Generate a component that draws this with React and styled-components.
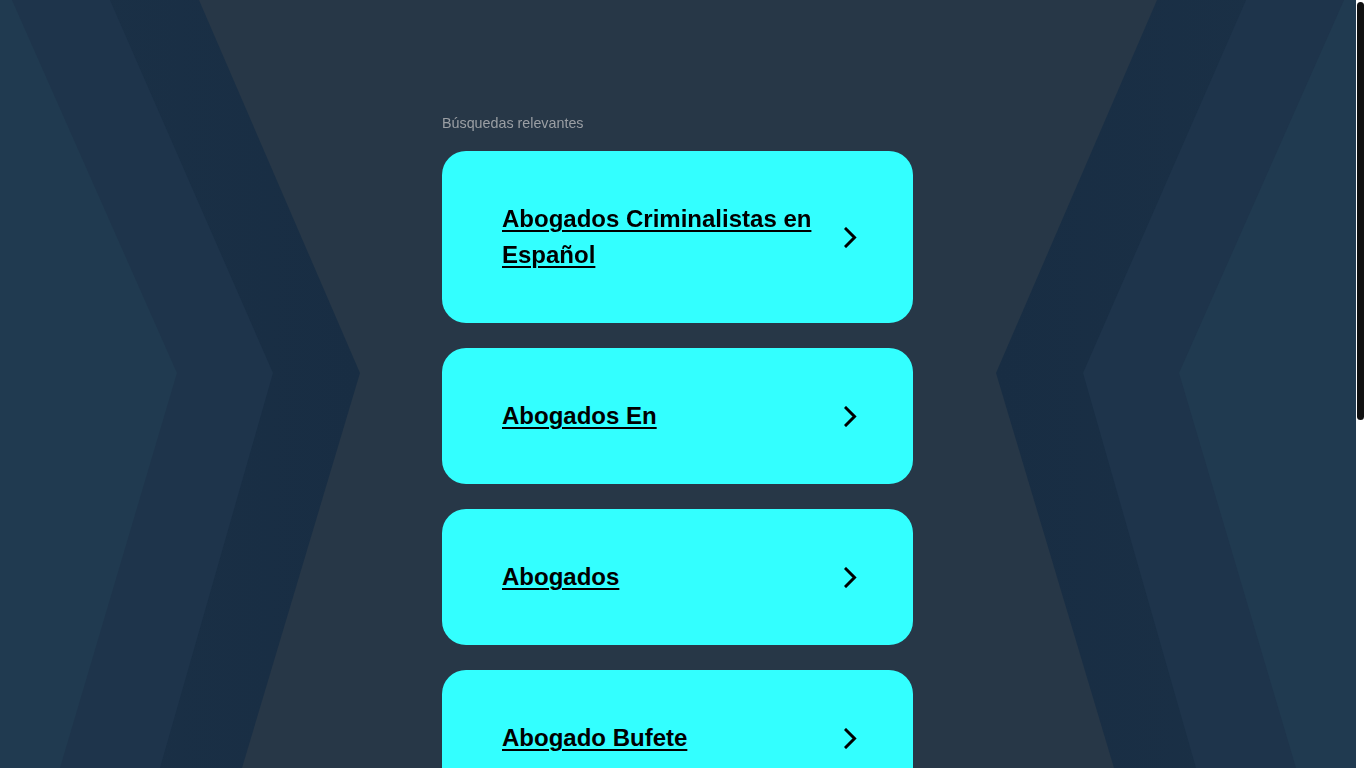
import React from "react";
import styled, { createGlobalStyle } from "styled-components";

const Global = createGlobalStyle`
  html, body { margin: 0; padding: 0; }
  html { scrollbar-width: none; }
  ::-webkit-scrollbar { display: none; }
  body {
    background: #273747;
    font-family: "Liberation Sans", Arial, sans-serif;
  }
`;

const Backdrop = styled.div`
  position: fixed;
  top: 0;
  bottom: 0;
  left: 0;
  right: 10px;
  z-index: 0;
  pointer-events: none;
`;

const BackdropSvg = styled.svg`
  width: 100%;
  height: 100%;
  display: block;
`;

const ScrollTrack = styled.div`
  position: fixed;
  top: 0;
  right: 0;
  bottom: 0;
  width: 10px;
  background: #fff;
  z-index: 5;
`;

const ScrollThumb = styled.div`
  position: absolute;
  top: 2px;
  left: 1px;
  width: 7px;
  height: 418px;
  border-radius: 4px;
  background: #111;
`;

const Page = styled.main`
  position: relative;
  z-index: 1;
  display: flex;
  justify-content: center;
  padding: 115px 11px 440px 0;
`;

const Column = styled.section`
  width: 471px;
  display: flex;
  flex-direction: column;
`;

const Heading = styled.h2`
  margin: 0 0 20px;
  font-size: 14.3px;
  line-height: 16px;
  font-weight: 400;
  color: #9b9fa4;
`;

const List = styled.div`
  display: flex;
  flex-direction: column;
  gap: 25px;
`;

const Card = styled.a`
  display: flex;
  align-items: center;
  justify-content: space-between;
  gap: 24px;
  background: #33ffff;
  border-radius: 24px;
  padding: 50px 56px 50px 60px;
  text-decoration: none;
  color: #000;
`;

const Label = styled.span`
  flex: 1;
  font-size: 24px;
  line-height: 36px;
  font-weight: 700;
  text-decoration: underline;
  text-decoration-thickness: 2px;
  text-underline-offset: 3px;
  color: #000;
`;

const Arrow = styled.svg`
  flex: none;
  width: 13px;
  height: 21px;
`;

const items = [
  "Abogados Criminalistas en Español",
  "Abogados En",
  "Abogados",
  "Abogado Bufete",
  "Abogados De Accidentes",
];

function Background() {
  const W = 1356;
  const m = (pts) => pts.map(([x, y]) => `${W - x},${y}`).join(" ");
  const p = (pts) => pts.map(([x, y]) => `${x},${y}`).join(" ");
  const c = [[0, 0], [199, 0], [360, 373], [242, 768], [0, 768]];
  const b = [[0, 0], [110, 0], [273, 373], [160, 768], [0, 768]];
  const a = [[0, 0], [12, 0], [177, 373], [60, 768], [0, 768]];
  return (
    <Backdrop>
      <BackdropSvg viewBox="0 0 1356 768" preserveAspectRatio="none">
        <defs>
          <linearGradient id="gl" x1="0" y1="0" x2="1" y2="0">
            <stop offset="0" stopColor="#1b3147" />
            <stop offset="1" stopColor="#182d43" />
          </linearGradient>
          <linearGradient id="gr" x1="1" y1="0" x2="0" y2="0">
            <stop offset="0" stopColor="#1b3147" />
            <stop offset="1" stopColor="#182d43" />
          </linearGradient>
        </defs>
        <polygon points={p(c)} fill="url(#gl)" />
        <polygon points={p(b)} fill="#1e344b" />
        <polygon points={p(a)} fill="#203a50" />
        <polygon points={m(c)} fill="url(#gr)" />
        <polygon points={m(b)} fill="#1e344b" />
        <polygon points={m(a)} fill="#203a50" />
      </BackdropSvg>
    </Backdrop>
  );
}

export default function App() {
  return (
    <>
      <Global />
      <Background />
      <ScrollTrack>
        <ScrollThumb />
      </ScrollTrack>
      <Page>
        <Column>
          <Heading>Búsquedas relevantes</Heading>
          <List>
            {items.map((t) => (
              <Card key={t} href="#">
                <Label>{t}</Label>
                <Arrow viewBox="0 0 13 21">
                  <polyline
                    points="2,2 10.5,10.5 2,19"
                    fill="none"
                    stroke="#000"
                    strokeWidth="3"
                    strokeLinecap="square"
                  />
                </Arrow>
              </Card>
            ))}
          </List>
        </Column>
      </Page>
    </>
  );
}
